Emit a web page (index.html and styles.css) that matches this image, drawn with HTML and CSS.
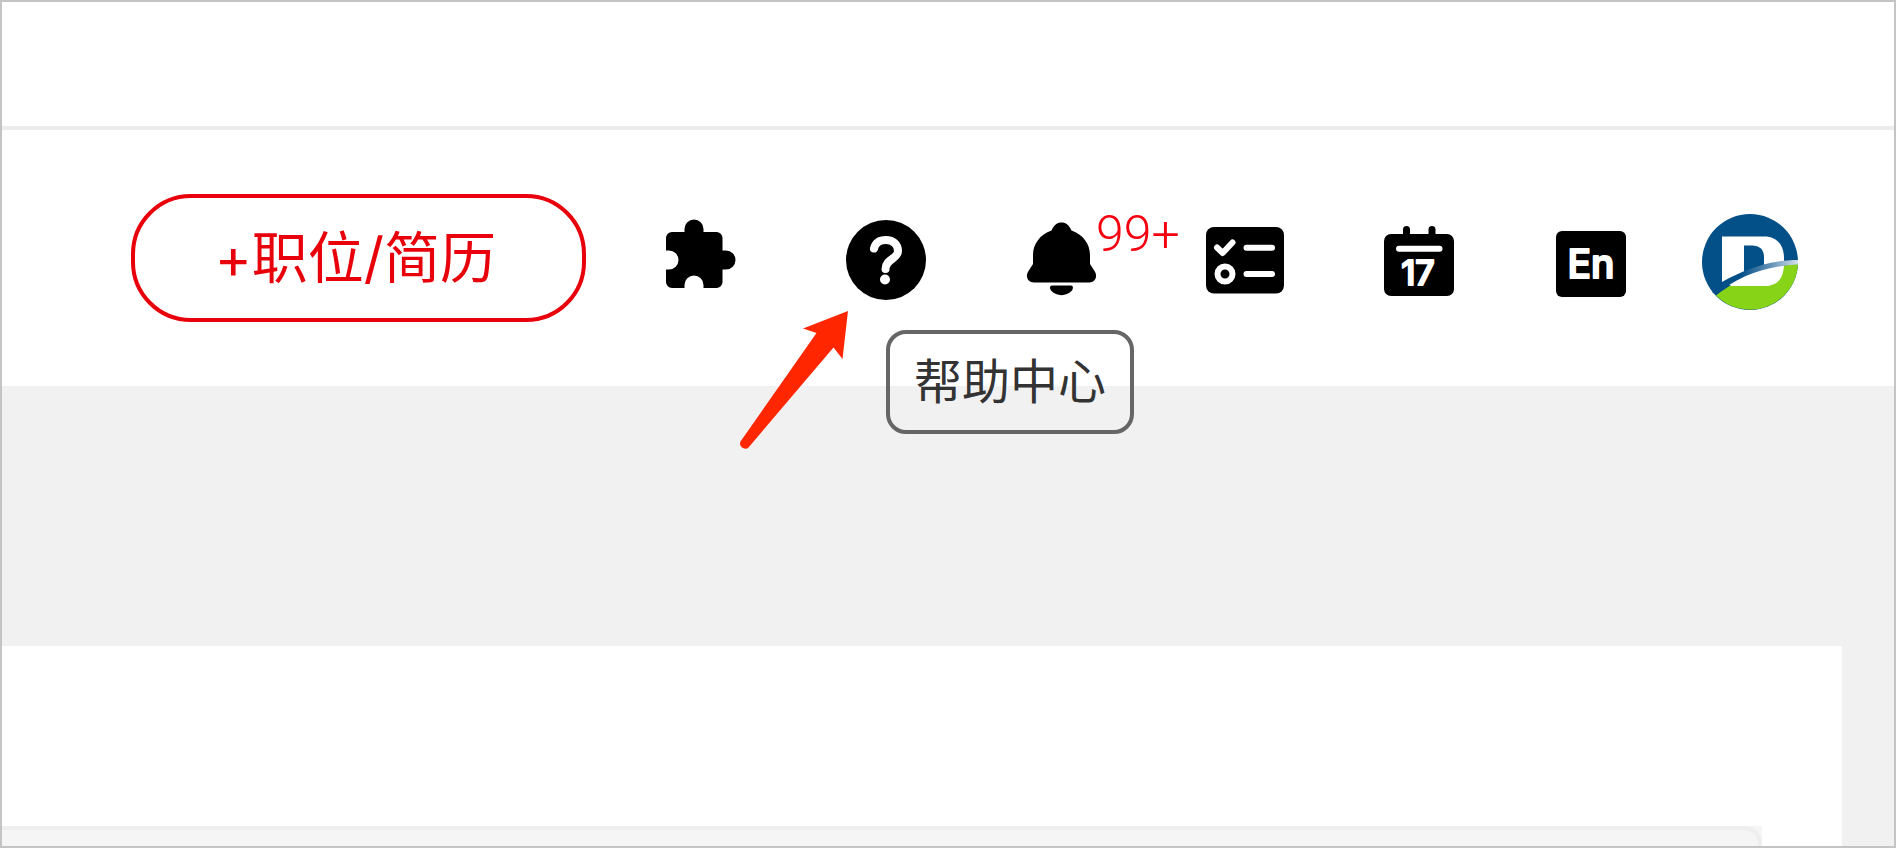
FILE: index.html
```
<!DOCTYPE html>
<html lang="zh-CN">
<head>
  <meta charset="UTF-8">
  <meta name="viewport" content="width=device-width, initial-scale=1.0">
  <title>帮助中心</title>
  <link rel="stylesheet" href="styles.css">
</head>
<body>
  <div class="page">
    <div class="topbar"></div>

    <header class="toolbar">
      <button type="button" class="add-btn">+职位/简历</button>

      <nav class="icons">
        <button type="button" class="icon-btn wide" aria-label="插件">
          <svg width="70" height="104" viewBox="0 0 70 104">
            <path d="M6 26H18.5V23A9.5 9.5 0 0 1 37.5 23V26H50.500A6 6 0 0 1 56.500 32V44.500H60A9.500 9.500 0 0 1 60 63.500H56.500V76A6 6 0 0 1 50.500 82H37.500V79A9.500 9.500 0 0 0 18.500 79V82H6A6 6 0 0 1 0 76V63.500H3A9.500 9.500 0 0 0 3 44.500H0V32A6 6 0 0 1 6 26Z"/>
          </svg>
        </button>

        <div class="help">
          <button type="button" class="icon-btn" aria-label="帮助中心" aria-describedby="help-tip">
            <svg width="80" height="104" viewBox="0 0 80 104">
              <circle cx="40" cy="54" r="40"/>
              <path class="line thick" d="M28 42.500C29.500 36.500 34 34 40 34C47 34 52 38.500 52 45C52 53 39.500 53 39.500 63"/>
              <circle class="dot" cx="39" cy="73.500" r="5"/>
            </svg>
          </button>
          <div class="tooltip" id="help-tip" role="tooltip">帮助中心</div>
          <svg class="arrow" width="110" height="140" viewBox="0 0 110 140">
            <path d="M109 1L64 18.500L77.500 23L1.500 131.500C-1 136 6 141 9.500 137.500L94.500 37.500L103.500 49Z"/>
          </svg>
        </div>

        <button type="button" class="icon-btn wide bell" aria-label="通知">
          <svg width="70" height="104" viewBox="0 0 70 104">
            <path d="M25.500 24.500C28 19 31 16.500 35.500 16.500C40 16.500 43 19 45.500 24.500C57 28.500 64 38 64 49V58L68.500 65C72 70 69.500 76.500 63.500 76.500H8C1.500 76.500-1 70 2.500 65L7 58V49C7 38 14 28.500 25.500 24.500Z"/>
            <path d="M26 79.500H45C47.500 79.500 47.500 83 45.500 85C40.500 90.500 30.500 90.500 25.500 85C23.500 83 23.500 79.500 26 79.500Z"/>
          </svg>
          <span class="badge">99+</span>
        </button>

        <button type="button" class="icon-btn" aria-label="任务">
          <svg width="78" height="104" viewBox="0 0 78 104">
            <rect y="21" width="78" height="66.500" rx="8"/>
            <path class="line" d="M11 41.500L16.700 47L26.500 36.500M40.500 41.700H66M40.500 68H66"/>
            <circle class="line" cx="19" cy="68" r="7.500"/>
          </svg>
        </button>

        <button type="button" class="icon-btn" aria-label="日历">
          <svg width="72" height="104" viewBox="0 0 72 104">
            <rect y="28" width="70" height="62" rx="7"/>
            <path class="peg" d="M22.500 23.500V32M48 23.500V32"/>
            <path class="line" d="M15 42.700H55.500"/>
            <text class="mark" x="34" y="79" font-size="34">17</text>
          </svg>
        </button>

        <button type="button" class="icon-btn last" aria-label="English">
          <svg width="70" height="104" viewBox="0 0 70 104">
            <rect y="25" width="70" height="66" rx="6"/>
            <text class="mark" x="35" y="72" font-size="39">En</text>
          </svg>
        </button>

        <a href="#" class="logo" aria-label="主页">
          <svg width="96" height="104" viewBox="0 0 96 104">
            <defs>
              <linearGradient id="swoosh" x1="0" y1="0" x2="1" y2="0">
                <stop offset=".3" stop-color="#034f88"/>
                <stop offset=".65" stop-color="#5f8eb4"/>
                <stop offset="1" stop-color="#d3e0eb"/>
              </linearGradient>
            </defs>
            <circle cx="48" cy="56" r="48" fill="#034f88"/>
            <path d="M14 89.500C35 70 65 60 96 58A48 48 0 0 1 14 89.500Z" fill="#86d318"/>
            <path d="M20 30.500H62C75 30.500 82 39 82 52V57C82 72 76 80 62 80H20Z" fill="#fff"/>
            <path d="M42 39.500H50C58 39.500 62 44 62 51V60L42 67Z" fill="#034f88"/>
            <path d="M14 89C35 70 65 60 96 58.500V54C68 54 43 63 20 76V80Z" fill="url(#swoosh)"/>
            <path d="M20 76V80L10 86L14 89L29 79Z" fill="#034f88"/>
          </svg>
        </a>
      </nav>
    </header>

    <main class="content">
      <section class="panel">
        <div class="inner"><div class="inner-box"></div></div>
      </section>
    </main>
  </div>
</body>
</html>
```
FILE: styles.css
```
* {
  box-sizing: border-box;
}
body {
  margin: 0;
  font-family: "Noto Sans CJK SC", sans-serif;
  color: #333;
}
.page {
  display: flex;
  flex-direction: column;
  min-height: 100vh;
  border: 2px solid #c4c4c4;
  background: #fff;
  overflow: hidden;
}
.topbar {
  height: 128px;
  border-bottom: 4px solid #ebecec;
}
.toolbar {
  display: flex;
  align-items: center;
  justify-content: flex-end;
  padding: 64px 96px 64px 0;
}
.add-btn {
  height: 128px;
  margin-right: 80px;
  padding: 0 86px 0 80px;
  border: 4px solid #e8000b;
  border-radius: 60px;
  background: none;
  color: #e8000b;
  font-family: Inter, "Noto Sans CJK SC", sans-serif;
  font-size: 56px;
  line-height: 1;
  white-space: nowrap;
  cursor: pointer;
}

/* toolbar icons */
.icons {
  display: flex;
  align-items: center;
}
.icons svg {
  display: block;
}
.icon-btn {
  margin: 0 100px 0 0;
  padding: 0;
  border: 0;
  background: none;
  color: #000;
  cursor: pointer;
}
.icon-btn.wide {
  margin-right: 110px;
}
.icon-btn.last {
  margin-right: 76px;
}
.line {
  fill: none;
  stroke: #fff;
  stroke-width: 6;
  stroke-linecap: round;
  stroke-linejoin: round;
}
.line.thick {
  stroke-width: 8;
}
.dot {
  fill: #fff;
}
.peg {
  stroke: #000;
  stroke-width: 7;
  stroke-linecap: round;
}
.mark {
  fill: #fff;
  stroke: #fff;
  stroke-width: 2;
  stroke-linejoin: round;
  font-family: Inter, sans-serif;
  font-weight: 500;
  text-anchor: middle;
}
.bell {
  position: relative;
}
.badge {
  position: absolute;
  top: 3px;
  left: 70px;
  color: #f5000f;
  font-family: Roboto, sans-serif;
  font-size: 50px;
  font-weight: 300;
  line-height: 50px;
}

/* tooltip and pointer */
.help {
  position: relative;
  display: flex;
}
.tooltip {
  position: absolute;
  top: 124px;
  left: 40px;
  z-index: 1;
  padding: 8px 24px 16px;
  border: 4px solid #666;
  border-radius: 20px;
  font-size: 48px;
  line-height: 72px;
  white-space: nowrap;
}
.arrow {
  position: absolute;
  top: 104px;
  left: -107px;
  z-index: 1;
  fill: #ff2600;
}

.content {
  flex: 1;
  display: flex;
  padding: 260px 52px 0 0;
  background: #f1f1f1;
}
.panel {
  flex: 1;
  display: flex;
  flex-direction: column;
  padding: 180px 80px 0 0;
  background: #fff;
}
.inner {
  flex: 1;
  display: flex;
  background: #f5f5f5;
}
.inner-box {
  flex: 1;
  border: 4px solid #eee;
  border-width: 4px 4px 0 0;
  border-top-right-radius: 18px;
}
```
